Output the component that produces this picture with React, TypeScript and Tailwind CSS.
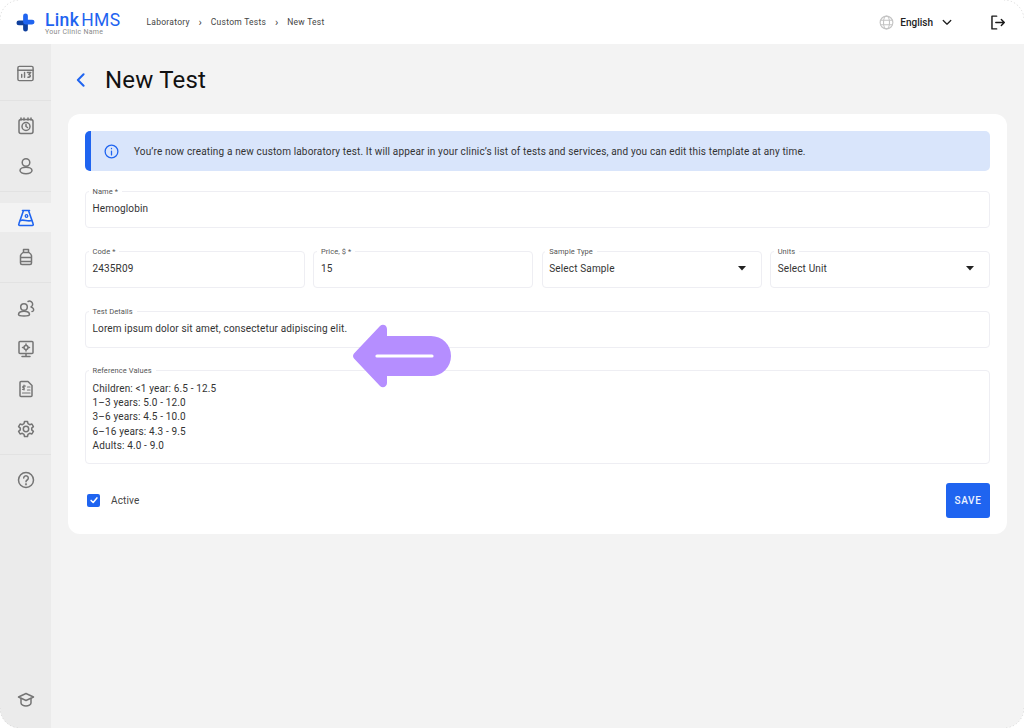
import React from "react";

const ic = "w-5 h-5 text-[#757575]";
const S = ({ children, className = ic }: { children: React.ReactNode; className?: string }) => (
  <svg viewBox="0 0 20 20" fill="none" stroke="currentColor" strokeWidth="1.5" strokeLinecap="round" strokeLinejoin="round" className={className}>
    {children}
  </svg>
);

const Item = ({ children }: { children: React.ReactNode }) => (
  <div className="h-10 flex items-center justify-center">{children}</div>
);

function Sidebar() {
  return (
    <aside className="w-[51px] shrink-0 bg-[#ebebeb] flex flex-col">
      <div className="pt-[9px] pb-[7px] border-b border-[#e2e2e2]">
        <Item>
          <S className="w-[19px] h-[19px] text-[#757575]">
            <rect x="2" y="2.5" width="16" height="15" rx="1.5" />
            <path d="M2 6.5h16M6 14v-3M9 14V9M12 9h3.5l-2 2c2 0 2.5 3-1 3" />
          </S>
        </Item>
      </div>
      <div className="py-[5px] border-b border-[#e2e2e2]">
        <Item>
          <S>
            <rect x="3" y="3.5" width="14" height="14" rx="2" />
            <circle cx="10" cy="10.5" r="4" />
            <path d="M10 8.500v2l1.500 1M5 2v2M8 2v2M12 2v2M15 2v2" />
          </S>
        </Item>
        <Item>
          <S>
            <circle cx="10" cy="6.5" r="3.8" />
            <ellipse cx="10" cy="14.5" rx="6" ry="3.2" />
          </S>
        </Item>
      </div>
      <div className="pt-[11px] pb-[5px] border-b border-[#e2e2e2]">
        <div className="h-[29px] bg-[#f3f3f3] flex items-center justify-center text-[#1f64f0]">
          <S className="w-5 h-5">
            <path d="M6.500 2.500h7M7.500 2.500L2.800 16c-.3.8.2 1.500 1 1.500h12.400c.8 0 1.300-.7 1-1.500L12.500 2.500" strokeWidth="1.600" />
            <path d="M4.500 12.500c3-1.500 7 1.500 11 0" strokeWidth="1.600" />
            <circle cx="10.500" cy="8" r="1.300" strokeWidth="1.300" />
          </S>
        </div>
        <div className="h-[5px]" />
        <Item>
          <S>
            <path d="M7.500 2.500h5v3h-5zM7 5.500c-1.500 1-2.500 2-2.500 3.500v7c0 1 .7 1.500 1.500 1.500h8c.8 0 1.500-.5 1.500-1.500V9c0-1.500-1-2.500-2.500-3.500zM4.500 10.500h11M4.500 14.500h11" />
          </S>
        </Item>
      </div>
      <div className="pt-[6px] pb-[5px] border-b border-[#e2e2e2]">
        <Item>
          <S>
            <circle cx="8" cy="8" r="3.300" />
            <path d="M2.500 15.500c0-2 2.500-3.300 5.500-3.300s5.500 1.300 5.500 3.300c0 1-1.500 1.500-5.500 1.500s-5.500-.5-5.500-1.500zM12 2.500a3 3 0 0 1 3 5.500c2 .5 3 2 2.500 3.500-.3.7-1 1-1.500 1" />
          </S>
        </Item>
        <Item>
          <S>
            <rect x="3" y="2.500" width="14" height="12" rx="1" />
            <circle cx="10" cy="8.500" r="2" />
            <path d="M10 5v1M10 11v1M6.500 8.500h1M12.500 8.500h1M10 14.500v3M6 17.500h8" />
          </S>
        </Item>
        <Item>
          <S>
            <path d="M4 3.500c0-.6.4-1 1-1h7l4 4v10c0 .6-.4 1-1 1H5c-.6 0-1-.4-1-1z" />
            <path d="M8 6v5M9.500 7H7.500c-1 0-1 2 0 2s1.200 1.500 0 1.500H6.500M11.500 8H14M11.500 11H14M6.500 14H14" strokeWidth="1.200" />
          </S>
        </Item>
        <Item>
          <S>
            <circle cx="10" cy="10" r="2.700" />
            <path d="M8.500 2.500h3l.5 2.200 1.700 1 2.200-.7 1.500 2.600-1.700 1.500v1.800l1.700 1.500-1.500 2.600-2.200-.7-1.700 1-.5 2.200h-3l-.5-2.200-1.700-1-2.200.7-1.500-2.600L4.300 10.900V9.100L2.600 7.600l1.500-2.600 2.200.7 1.700-1z" />
          </S>
        </Item>
      </div>
      <div className="py-[5px]">
        <Item>
          <S>
            <circle cx="10" cy="10" r="7.500" />
            <path d="M7.700 8a2.300 2.300 0 1 1 3.500 2c-.8.500-1.200 1-1.200 1.800" />
            <circle cx="10" cy="14.300" r=".4" />
          </S>
        </Item>
      </div>
      <div className="mt-auto mb-2">
        <Item>
          <S>
            <path d="M10 3.500l7.500 3.500L10 10.500 2.500 7z" />
            <path d="M5 8.500v4.500c0 1.500 2.500 3 5 3s5-1.500 5-3V8.500" />
          </S>
        </Item>
      </div>
    </aside>
  );
}

const Field = ({ label, value, className = "", select = false }: { label: string; value: string; className?: string; select?: boolean }) => (
  <div className={`relative h-[37px] border border-[#eeeef3] rounded-[4px] flex items-center justify-between pl-[6.5px] pr-[15px] pb-[1px] ${className}`}>
    <span className="absolute -top-[5px] left-[2.5px] bg-white px-[4px] text-[7.5px] leading-[9px] tracking-[0.08px] text-[#555]">{label}</span>
    <span className="text-[10px] tracking-[0.15px] text-[#333]">{value}</span>
    {select && (
      <svg viewBox="0 0 8 5" className="w-[8px] h-[5px]">
        <path d="M0 0h8L4 4.500z" fill="#222" />
      </svg>
    )}
  </div>
);

const Corner = ({ className, d }: { className: string; d: string }) => (
  <svg viewBox="0 0 20 20" className={`absolute w-[20px] h-[20px] ${className}`} fill="none" stroke="#cfcfcf" strokeWidth="0.8" strokeDasharray="1 2.500">
    <path d={d} />
  </svg>
);

export default function App() {
  return (
    <div className="relative w-[1024px] h-[728px] bg-white overflow-hidden" style={{ fontFamily: "Roboto, sans-serif" }}>
      <div className="w-full h-full rounded-[20px] overflow-hidden flex flex-col bg-[#f3f3f3]">
        <header className="h-[44px] shrink-0 bg-white flex items-center">
          <svg viewBox="0 0 20 20" className="w-[19px] h-[19px] ml-[16px]">
            <path d="M3 10.500H10V17" fill="none" stroke="#0f3f9c" strokeWidth="5" strokeLinecap="round" strokeLinejoin="round" />
            <path d="M10 3V9.500H17" fill="none" stroke="#1f64f0" strokeWidth="5" strokeLinecap="round" strokeLinejoin="round" />
          </svg>
          <div className="ml-[10px] w-[92px] pt-[4px] flex flex-col items-start whitespace-nowrap">
            <div className="text-[17.500px] leading-[16px] text-[#1f64f0] tracking-[0.35px]">
              <span className="font-medium">Link</span>
              <span className="ml-[2px]">HMS</span>
            </div>
            <div className="text-[7px] leading-[8px] text-[#8a8a8a] tracking-[0.3px]">Your Clinic Name</div>
          </div>
          <nav className="ml-[9.500px] flex items-center text-[8.500px] tracking-[0.26px] text-[#444]">
            <span>Laboratory</span>
            <span className="w-[21px] text-center text-[11px] leading-[11px]">›</span>
            <span>Custom Tests</span>
            <span className="w-[21px] text-center text-[11px] leading-[11px]">›</span>
            <span>New Test</span>
          </nav>
          <div className="ml-auto flex items-center">
            <S className="w-[15px] h-[15px] text-[#c4c4c4]">
              <circle cx="10" cy="10" r="8.500" />
              <ellipse cx="10" cy="10" rx="4" ry="8.500" />
              <path d="M2 7h16M2 13h16" />
            </S>
            <span className="ml-[6px] text-[10px] font-medium tracking-[0] text-[#222]">English</span>
            <svg viewBox="0 0 12 8" className="ml-[9px] w-[10px] h-[7px]" fill="none" stroke="#222" strokeWidth="1.600" strokeLinecap="round" strokeLinejoin="round">
              <path d="M1.500 1.500L6 6l4.500-4.500" />
            </svg>
            <svg viewBox="0 0 20 20" className="ml-[37px] mr-[18px] w-[17px] h-[17px]" fill="none" stroke="#1a1a1a" strokeWidth="1.700" strokeLinecap="round" strokeLinejoin="round">
              <path d="M9 2.500H3.500v15H9M8 10h10M14.500 6.500L18 10l-3.500 3.500" />
            </svg>
          </div>
        </header>
        <div className="flex flex-1 min-h-0">
          <Sidebar />
          <main className="flex-1 min-w-0 pl-[17px] pr-[17px]">
            <div className="h-[70px] flex items-center pt-[2px]">
              <svg viewBox="0 0 10 16" className="ml-[8px] w-[9px] h-[14px]" fill="none" stroke="#1f64f0" strokeWidth="2.300" strokeLinecap="round" strokeLinejoin="round">
                <path d="M8.500 1.500L2 8l6.500 6.500" />
              </svg>
              <h1 className="ml-[20px] text-[24px] leading-[30px] tracking-[0.2px] text-[#111]">New Test</h1>
            </div>
            <section className="bg-white rounded-[12px] p-[17px] h-[420px]">
              <div className="h-[40px] bg-[#d9e5fb] rounded-[5px] border-l-[6px] border-[#1f64f0] flex items-center pl-[13px]">
                <svg viewBox="0 0 20 20" className="w-[15px] h-[15px]" fill="none" stroke="#1f64f0" strokeWidth="1.700" strokeLinecap="round">
                  <circle cx="10" cy="10" r="8.500" />
                  <path d="M10 9.500v5M10 6v.2" />
                </svg>
                <span className="ml-[15px] text-[10px] tracking-[0.155px] text-[#333]">
                  You’re now creating a new custom laboratory test. It will appear in your clinic’s list of tests and services, and you can edit this template at any time.
                </span>
              </div>
              <Field className="mt-[19.500px]" label="Name *" value="Hemoglobin" />
              <div className="mt-[23px] grid grid-cols-4 gap-[8.500px]">
                <Field label="Code *" value="2435R09" />
                <Field label="Price, $ *" value="15" />
                <Field label="Sample Type" value="Select Sample" select />
                <Field label="Units" value="Select Unit" select />
              </div>
              <Field className="mt-[23px]" label="Test Details" value="Lorem ipsum dolor sit amet, consectetur adipiscing elit." />
              <div className="relative mt-[22.500px] h-[93.500px] border border-[#eeeef3] rounded-[4px] pl-[6.500px] pt-[11px]">
                <span className="absolute -top-[5px] left-[2.500px] bg-white px-[4px] text-[7.500px] leading-[9px] tracking-[0.08px] text-[#555]">Reference Values</span>
                <div className="text-[10px] leading-[14.200px] tracking-[0.15px] text-[#333]">
                  <div>Children: &lt;1 year: 6.5 - 12.5</div>
                  <div>1–3 years: 5.0 - 12.0</div>
                  <div>3–6 years: 4.5 - 10.0</div>
                  <div>6–16 years: 4.3 - 9.5</div>
                  <div>Adults: 4.0 - 9.0</div>
                </div>
              </div>
              <div className="mt-[19px] flex items-center justify-between">
                <div className="flex items-center">
                  <div className="ml-[2px] w-[13px] h-[13px] rounded-[2px] bg-[#1f64f0] flex items-center justify-center">
                    <svg viewBox="0 0 12 12" className="w-[10px] h-[10px]" fill="none" stroke="#fff" strokeWidth="1.800" strokeLinecap="round" strokeLinejoin="round">
                      <path d="M2.500 6.500L5 9l4.500-5.500" />
                    </svg>
                  </div>
                  <span className="ml-[11px] text-[10px] tracking-[0.15px] text-[#444]">Active</span>
                </div>
                <button className="w-[44px] h-[35px] rounded-[3px] bg-[#1f64f0] text-[#eef3ff] text-[10px] font-medium tracking-[0.6px]">SAVE</button>
              </div>
            </section>
          </main>
        </div>
      </div>
      <Corner className="left-0 top-0" d="M0 20A20 20 0 0 1 20 0" />
      <Corner className="right-0 top-0" d="M0 0A20 20 0 0 1 20 20" />
      <Corner className="left-0 bottom-0" d="M0 0A20 20 0 0 0 20 20" />
      <Corner className="right-0 bottom-0" d="M20 0A20 20 0 0 1 0 20" />
      <svg viewBox="0 0 98 64" className="absolute left-[353px] top-[324px] w-[98px] h-[64px]">
        <path d="M1 29.500L27 2c2.500-2.500 7-1 7 3v7h44a20 20 0 0 1 0 40H34v7c0 4-4.500 5.500-7 3L1 34.500c-1.300-1.500-1.300-3.500 0-5z" fill="#b58eff" />
        <path d="M24 32h55" stroke="#fff" strokeWidth="3.200" strokeLinecap="round" />
      </svg>
    </div>
  );
}
